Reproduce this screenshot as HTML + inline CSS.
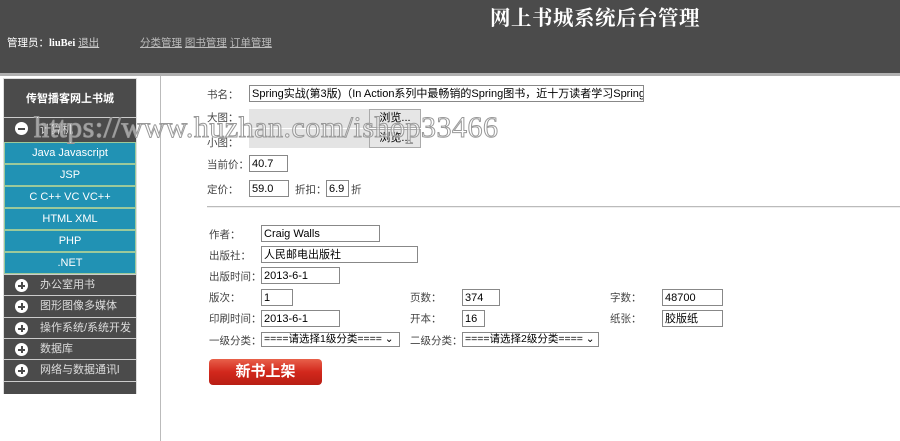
<!DOCTYPE html><html><head><meta charset="utf-8"><style>
*{margin:0;padding:0;box-sizing:border-box}
body{width:900px;height:441px;overflow:hidden;background:#fff;font-family:"Liberation Sans","Noto Sans CJK SC",sans-serif;font-size:11px;color:#333;position:relative}
.a{position:absolute;white-space:nowrap}
.hd{left:0;top:0;width:900px;height:73px;background:#4b4b4b}
.strip{left:0;top:73px;width:900px;height:3px;background:#b0b0b0}
.vl{left:160px;top:76px;width:1px;height:365px;background:#bbb}
.side{left:3px;top:78px;width:134px;height:316px;background:#e8e8e8;border:1px solid #ddd}
.it{position:absolute;left:4px;width:132px;height:22px;line-height:20px;font-size:11px;color:#fff}
.blue{background:#2192b4;border:1px solid #9cc99a;text-align:center}
.dark{background:#4b4b4b;border-top:1px solid #ccc;padding-left:36px;color:#ddd}
.ic{position:absolute;left:11px;top:4px;width:13px;height:13px;border-radius:50%;background:#fff}
.ic:before{content:"";position:absolute;left:3px;top:5.5px;width:7px;height:2px;background:#4b4b4b}
.pl:after{content:"";position:absolute;left:5.5px;top:3px;width:2px;height:7px;background:#4b4b4b}
.in{position:absolute;height:17px;border:1px solid #888;background:#fff;font-size:11px;line-height:17px;padding-left:2px;color:#000;overflow:hidden;white-space:nowrap}
.lb{position:absolute;font-size:10.5px;color:#444}
.sel{position:absolute;height:15px;border:1px solid #888;font-size:10.5px;line-height:13px;padding-left:2px;color:#000}
</style></head><body>
<div class="a hd"></div><div class="a strip"></div>
<div class="a" style="left:490px;top:1px;font:bold 20.5px 'Liberation Serif','Noto Serif CJK SC',serif;color:#fff;letter-spacing:0.5px">网上书城系统后台管理</div>
<div class="a" style="left:7px;top:35px;color:#fff;font-size:10.5px">管理员：<b style="font-family:'Liberation Serif',serif">liuBei</b> <u style="color:#ccc">退出</u></div>
<div class="a" style="left:140px;top:35px;color:#bbb;font-size:10.5px"><u>分类管理</u> <u>图书管理</u> <u>订单管理</u></div>
<div class="a vl"></div>
<div class="a side"></div>
<div class="a" style="left:4px;top:79px;width:132px;height:38px;background:#4b4b4b;color:#fff;font-weight:bold;text-align:center;line-height:40px;font-size:11px">传智播客网上书城</div>
<div class="it dark" style="top:117px;height:25px;line-height:25px"><span class="ic"></span>计算机</div>
<div class="it blue" style="top:142px">Java Javascript</div>
<div class="it blue" style="top:164px">JSP</div>
<div class="it blue" style="top:186px">C C++ VC VC++</div>
<div class="it blue" style="top:208px">HTML XML</div>
<div class="it blue" style="top:230px">PHP</div>
<div class="it blue" style="top:252px">.NET</div>
<div class="it dark" style="top:274px"><span class="ic pl"></span>办公室用书</div>
<div class="it dark" style="top:295px"><span class="ic pl"></span>图形图像多媒体</div>
<div class="it dark" style="top:317px"><span class="ic pl"></span>操作系统/系统开发</div>
<div class="it dark" style="top:338px"><span class="ic pl"></span>数据库</div>
<div class="it dark" style="top:359px"><span class="ic pl"></span>网络与数据通讯l</div>
<div class="it dark" style="top:381px;height:13px"></div>

<div class="lb" style="left:207px;top:87px">书名：</div>
<div class="in" style="left:249px;top:85px;width:395px">Spring实战(第3版)（In Action系列中最畅销的Spring图书，近十万读者学习Spring的共同选择</div>
<div class="lb" style="left:207px;top:110px">大图：</div>
<div class="a" style="left:249px;top:109px;width:121px;height:19px;background:#e4e4e4"></div>
<div class="a" style="left:369px;top:109px;width:52px;height:19px;background:#e6e6e6;border:1px solid #aaa;text-align:center;line-height:17px;color:#000">浏览...</div>
<div class="lb" style="left:207px;top:135px">小图：</div>
<div class="a" style="left:249px;top:129px;width:121px;height:19px;background:#e4e4e4"></div>
<div class="a" style="left:369px;top:129px;width:52px;height:19px;background:#e6e6e6;border:1px solid #aaa;text-align:center;line-height:17px;color:#000">浏览...</div>
<div class="lb" style="left:207px;top:157px">当前价：</div>
<div class="in" style="left:249px;top:155px;width:39px">40.7</div>
<div class="lb" style="left:207px;top:182px">定价：</div>
<div class="in" style="left:249px;top:180px;width:40px">59.0</div>
<div class="lb" style="left:295px;top:182px">折扣：</div>
<div class="in" style="left:326px;top:180px;width:23px">6.9</div>
<div class="lb" style="left:351px;top:182px">折</div>
<div class="a" style="left:207px;top:206px;width:693px;height:2px;background:#bbb;border-bottom:1px solid #eee"></div>

<div class="lb" style="left:209px;top:227px">作者：</div>
<div class="in" style="left:261px;top:225px;width:119px">Craig Walls</div>
<div class="lb" style="left:209px;top:248px">出版社：</div>
<div class="in" style="left:261px;top:246px;width:157px">人民邮电出版社</div>
<div class="lb" style="left:209px;top:269px">出版时间：</div>
<div class="in" style="left:261px;top:267px;width:79px">2013-6-1</div>
<div class="lb" style="left:209px;top:290px">版次：</div>
<div class="in" style="left:261px;top:289px;width:32px">1</div>
<div class="lb" style="left:410px;top:290px">页数：</div>
<div class="in" style="left:462px;top:289px;width:38px">374</div>
<div class="lb" style="left:610px;top:290px">字数：</div>
<div class="in" style="left:662px;top:289px;width:61px">48700</div>
<div class="lb" style="left:209px;top:311px">印刷时间：</div>
<div class="in" style="left:261px;top:310px;width:79px">2013-6-1</div>
<div class="lb" style="left:410px;top:311px">开本：</div>
<div class="in" style="left:462px;top:310px;width:23px">16</div>
<div class="lb" style="left:610px;top:311px">纸张：</div>
<div class="in" style="left:662px;top:310px;width:61px">胶版纸</div>
<div class="lb" style="left:209px;top:333px">一级分类：</div>
<div class="sel" style="left:261px;top:332px;width:139px">====请选择1级分类==== ⌄</div>
<div class="lb" style="left:410px;top:333px">二级分类：</div>
<div class="sel" style="left:462px;top:332px;width:137px">====请选择2级分类==== ⌄</div>
<div class="a" style="left:209px;top:359px;width:113px;height:26px;border-radius:4px;background:linear-gradient(#e8604a,#d2281c 50%,#b81e14);color:#fff;font-weight:bold;font-size:15px;text-align:center;line-height:26px">新书上架</div>

<div class="a" style="left:34px;top:111px;font:30px 'Liberation Serif',serif;color:rgba(255,255,255,0.5);-webkit-text-stroke:1px #999;letter-spacing:0.5px">https://www.huzhan.com/ishop33466</div>
</body></html>
